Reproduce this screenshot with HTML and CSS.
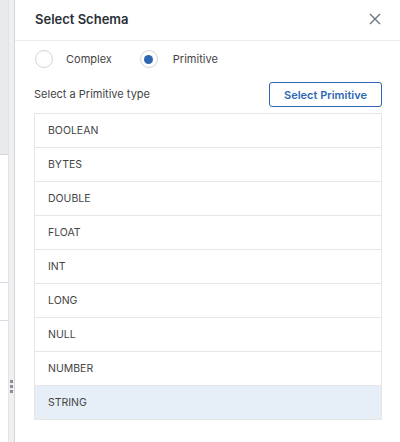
FILE: index.html
```html
<!DOCTYPE html>
<html>
<head>
<meta charset="utf-8">
<link rel="stylesheet" href="styles.css">
</head>
<body>
<div class="app">
  <div class="side">
    <div class="side-top"></div>
    <div class="side-row side-row-a"></div>
    <div class="side-row"></div>
  </div>
  <div class="resizer"><span class="dots"><i></i><i></i><i></i></span></div>
  <div class="panel">
    <div class="header">
      <div class="title">Select Schema</div>
      <svg class="close" width="12" height="12" viewBox="0 0 12 12"><path d="M1 1L11 11M11 1L1 11" stroke="#6b7580" stroke-width="1.4" fill="none"/></svg>
    </div>
    <div class="body">
      <div class="radios">
        <label class="radio"><span class="circle"></span><span class="rlabel">Complex</span></label>
        <label class="radio"><span class="circle checked"></span><span class="rlabel">Primitive</span></label>
      </div>
      <div class="toolbar">
        <span class="hint">Select a Primitive type</span>
        <button class="btn">Select Primitive</button>
      </div>
      <div class="list">
        <div class="item">BOOLEAN</div>
        <div class="item">BYTES</div>
        <div class="item">DOUBLE</div>
        <div class="item">FLOAT</div>
        <div class="item">INT</div>
        <div class="item">LONG</div>
        <div class="item">NULL</div>
        <div class="item">NUMBER</div>
        <div class="item selected">STRING</div>
      </div>
    </div>
  </div>
</div>
</body>
</html>
```
FILE: styles.css
```css
html, body { margin: 0; padding: 0; }
body { font-family: Inter, "Noto Sans", sans-serif; color: #333; background: #fff; }
.app { display: flex; height: 442px; width: 400px; overflow: hidden; }
.side { width: 8px; display: flex; flex-direction: column; background: #fff; }
.side-top { height: 155px; background: #e8eaed; border-bottom: 1px solid #d4d6d9; box-sizing: border-box; }
.side-row { height: 38px; border-bottom: 1px solid #d8dadd; box-sizing: border-box; }
.side-row-a { height: 128px; }
.resizer { width: 5px; background: #eef0f2; border-right: 1px solid #d5d7da; border-left: 1px solid #e2e4e6; display: flex; flex-direction: column; align-items: center; justify-content: flex-start; padding-top: 380px; box-sizing: content-box; }
.dots { display: flex; flex-direction: column; gap: 2px; }
.dots i { display: block; width: 3px; height: 3px; background: #8a8f96; }
.panel { flex: 1; display: flex; flex-direction: column; }
.header { height: 41px; border-bottom: 1px solid #ececec; display: flex; align-items: center; justify-content: space-between; padding: 0 19px 0 20px; box-sizing: border-box; }
.title { font-size: 13px; font-weight: 600; color: #2b2f36; margin-top: -2px; }
.close { display: block; margin-top: -3px; }
.body { padding: 0 18px 0 19px; }
.radios { display: flex; height: 36px; align-items: center; gap: 0; }
.radio { display: flex; align-items: center; margin-right: 27px; }
.circle { width: 18px; height: 18px; border: 1px solid #d2d4d7; border-radius: 50%; box-sizing: border-box; margin-left: 1px; position: relative; }
.circle.checked::after { content: ""; position: absolute; left: 3.5px; top: 3.5px; width: 9px; height: 9px; border-radius: 50%; background: #2e66b4; }
.rlabel { font-size: 11px; margin-left: 13px; color: #444; }
.radio:last-child .rlabel { margin-left: 15px; }
.toolbar { display: flex; justify-content: space-between; align-items: center; height: 30px; margin-top: 2px; }
.hint { font-size: 11px; color: #444; }
.btn { font-family: Inter, "Noto Sans", sans-serif; font-size: 11px; font-weight: 600; color: #2e66b4; background: #fff; border: 1px solid #2e66b4; border-radius: 3px; width: 113px; height: 25px; padding: 0; margin-top: 1px; }
.list { margin-top: 4px; border: 1px solid #e6e6e6; }
.item { height: 33px; border-top: 1px solid #e6e6e6; display: flex; align-items: center; padding-left: 13px; font-size: 10.5px; color: #444; }
.item:first-child { border-top: none; }
.item.selected { background: #e6eff8; }
```
